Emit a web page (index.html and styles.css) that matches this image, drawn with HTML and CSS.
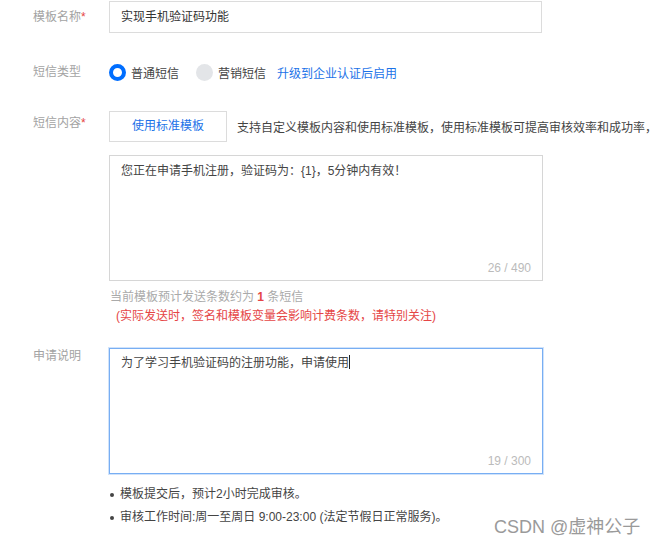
FILE: index.html
```
<!DOCTYPE html>
<html lang="zh-CN">
<head>
<meta charset="utf-8">
<title>模板</title>
<link rel="stylesheet" href="styles.css">
</head>
<body>
<div class="page">
  <form class="form">
    <div class="row row-name">
      <div class="label">模板名称<span class="req">*</span></div>
      <div class="field">
        <div class="input">实现手机验证码功能</div>
      </div>
    </div>

    <div class="row row-type">
      <div class="label">短信类型</div>
      <div class="field radios">
        <span class="radio radio-on"></span><span class="radio-text">普通短信</span>
        <span class="radio radio-off"></span><span class="radio-text">营销短信</span>
        <a class="link">升级到企业认证后启用</a>
      </div>
    </div>

    <div class="row row-content">
      <div class="label label-content">短信内容<span class="req">*</span></div>
      <div class="field">
        <div class="tool">
          <span class="btn">使用标准模板</span>
          <span class="tip">支持自定义模板内容和使用标准模板，使用标准模板可提高审核效率和成功率，</span>
        </div>
        <div class="textarea">
          <div class="ta-text">您正在申请手机注册，验证码为：{1}，5分钟内有效！</div>
          <div class="count">26 / 490</div>
        </div>
        <div class="estimate">当前模板预计发送条数约为 <b class="num">1</b> 条短信</div>
        <div class="warn">(实际发送时，签名和模板变量会影响计费条数，请特别关注)</div>
      </div>
    </div>

    <div class="row row-desc">
      <div class="label label-desc">申请说明</div>
      <div class="field">
        <div class="textarea textarea-focus">
          <div class="ta-text">为了学习手机验证码的注册功能，申请使用<span class="caret"></span></div>
          <div class="count">19 / 300</div>
        </div>
        <ul class="notes">
          <li><span class="dot"></span>模板提交后，预计2小时完成审核。</li>
          <li><span class="dot"></span>审核工作时间:周一至周日 9:00-23:00 (法定节假日正常服务)。</li>
        </ul>
      </div>
    </div>
  </form>
  <div class="watermark">CSDN @虚神公子</div>
</div>
</body>
</html>
```

FILE: styles.css
```
html, body {
  margin: 0;
  padding: 0;
  background: #ffffff;
}
body {
  width: 660px;
  height: 546px;
  overflow: hidden;
  font-family: "Liberation Sans", "Noto Sans CJK SC", sans-serif;
  font-size: 12px;
  color: #333;
}
.page {
  position: relative;
  width: 660px;
  height: 546px;
}
.form {
  padding-top: 1px;
}
.row {
  display: flex;
  align-items: flex-start;
}
.label {
  width: 76px;
  padding-left: 33px;
  flex: none;
  color: #a3a3a3;
  font-size: 12px;
  line-height: 32px;
  white-space: nowrap;
}
.req {
  color: #e54545;
}
.field {
  flex: 1;
  min-width: 0;
}
.input {
  box-sizing: border-box;
  width: 433px;
  height: 32px;
  border: 1px solid #dcdcdc;
  padding: 0 11px;
  line-height: 30px;
  color: #333;
}

/* radios */
.row-type {
  margin-top: 29px;
}
.row-type .label {
  line-height: 20px;
}
.radios {
  display: flex;
  align-items: center;
  height: 20px;
  white-space: nowrap;
}
.radio {
  box-sizing: border-box;
  width: 17px;
  height: 17px;
  border-radius: 50%;
  flex: none;
}
.radio-on {
  border: 4px solid #006eff;
  background: #fff;
}
.radio-off {
  background: #e3e5e8;
  margin-left: 17px;
}
.radio-text {
  margin-left: 5px;
  color: #444;
}
.link {
  margin-left: 11px;
  color: #1b72e8;
}

/* content */
.row-content {
  margin-top: 29px;
}
.label-content {
  line-height: 20px;
  padding-top: 2px;
}
.tool {
  display: flex;
  align-items: center;
  white-space: nowrap;
}
.btn {
  box-sizing: border-box;
  width: 118px;
  height: 31px;
  border: 1px solid #dcdcdc;
  text-align: center;
  line-height: 29px;
  color: #1b72e8;
  flex: none;
}
.tip {
  margin-left: 10px;
  color: #444;
}
.textarea {
  box-sizing: border-box;
  width: 434px;
  height: 126px;
  margin-top: 13px;
  border: 1px solid #d6d6d6;
  padding: 6px 11px 4px 11px;
  display: flex;
  flex-direction: column;
}
.ta-text {
  line-height: 18px;
  color: #444;
}
.count {
  margin-top: auto;
  align-self: flex-end;
  color: #bbb;
  line-height: 16px;
  font-size: 12px;
}
.estimate {
  margin-top: 7px;
  line-height: 19px;
  color: #aaa;
  padding-left: 1px;
}
.num {
  color: #e54545;
  font-weight: bold;
}
.warn {
  line-height: 19px;
  color: #e54545;
  padding-left: 7px;
}

/* desc */
.row-desc {
  margin-top: 22px;
}
.label-desc {
  line-height: 16px;
}
.row-desc .textarea {
  margin-top: 0;
  padding-top: 5px;
}
.textarea-focus {
  border: 1px solid #78aef3;
  box-shadow: 0 0 0 1px rgba(120, 174, 243, 0.35);
}
.caret {
  display: inline-block;
  width: 1px;
  height: 14px;
  background: #222;
  vertical-align: -2px;
}
.notes {
  list-style: none;
  margin: 9px 0 0 0;
  padding: 0;
}
.notes li {
  display: flex;
  align-items: center;
  line-height: 23px;
  color: #444;
  white-space: nowrap;
}
.dot {
  width: 4px;
  height: 4px;
  border-radius: 50%;
  background: #444;
  margin-left: 1px;
  margin-right: 6px;
  flex: none;
}
.watermark {
  position: absolute;
  left: 494px;
  top: 515px;
  font-size: 18px;
  line-height: 24px;
  color: #9a9a9a;
  white-space: nowrap;
}
```
